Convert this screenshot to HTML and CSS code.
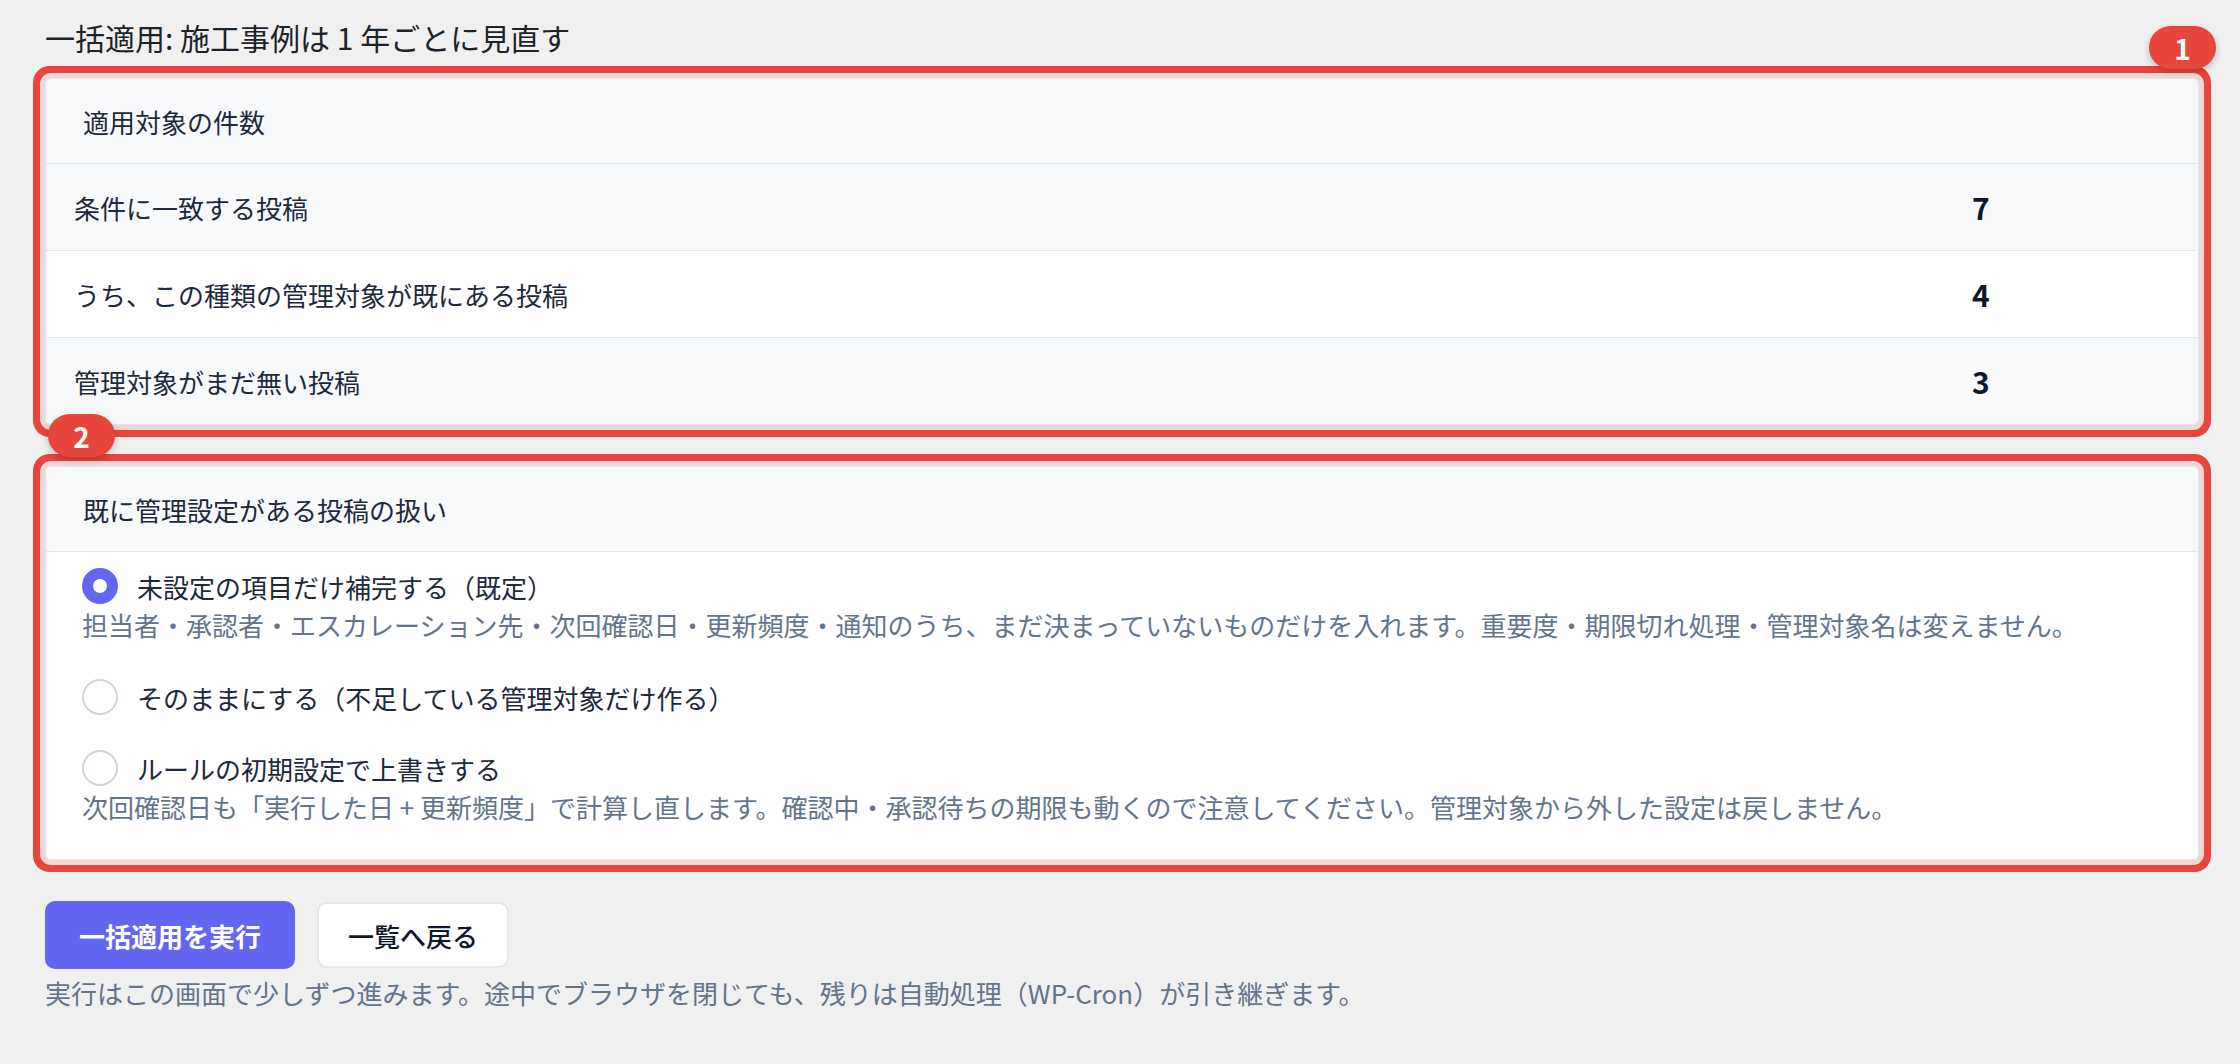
FILE: index.html
```html
<!DOCTYPE html>
<html lang="ja">
<head>
<meta charset="utf-8">
<title>一括適用</title>
<link rel="stylesheet" href="styles.css">
</head>
<body>
<div class="page">
  <h1 class="title">一括適用: 施工事例は 1 年ごとに見直す</h1>

  <section class="card card-counts">
    <span class="badge badge-right">1</span>
    <div class="card-head">適用対象の件数</div>
    <div class="row stripe">
      <span class="label">条件に一致する投稿</span>
      <span class="num">7</span>
    </div>
    <div class="row">
      <span class="label">うち、この種類の管理対象が既にある投稿</span>
      <span class="num">4</span>
    </div>
    <div class="row stripe last">
      <span class="label">管理対象がまだ無い投稿</span>
      <span class="num">3</span>
    </div>
  </section>

  <section class="card card-options">
    <span class="badge badge-left">2</span>
    <div class="card-head">既に管理設定がある投稿の扱い</div>
    <div class="options">
      <div class="option">
        <div class="opt-line"><span class="radio checked"></span><span class="opt-label">未設定の項目だけ補完する（既定）</span></div>
        <p class="opt-desc">担当者・承認者・エスカレーション先・次回確認日・更新頻度・通知のうち、まだ決まっていないものだけを入れます。重要度・期限切れ処理・管理対象名は変えません。</p>
      </div>
      <div class="option">
        <div class="opt-line"><span class="radio"></span><span class="opt-label">そのままにする（不足している管理対象だけ作る）</span></div>
      </div>
      <div class="option">
        <div class="opt-line"><span class="radio"></span><span class="opt-label">ルールの初期設定で上書きする</span></div>
        <p class="opt-desc">次回確認日も「実行した日 + 更新頻度」で計算し直します。確認中・承認待ちの期限も動くので注意してください。管理対象から外した設定は戻しません。</p>
      </div>
    </div>
  </section>

  <div class="actions">
    <button class="btn btn-primary">一括適用を実行</button>
    <button class="btn btn-secondary">一覧へ戻る</button>
  </div>
  <p class="note">実行はこの画面で少しずつ進みます。途中でブラウザを閉じても、残りは自動処理（WP-Cron）が引き継ぎます。</p>
</div>
</body>
</html>
```

FILE: styles.css
```css
* { box-sizing: border-box; }

html, body {
  margin: 0;
  padding: 0;
  background: #f0f0f1;
}

body {
  font-family: "Noto Sans CJK JP", "Noto Sans", "Liberation Sans", sans-serif;
  color: #1e293b;
}

.page {
  padding: 15px 41px 0 45px;
}

.title {
  margin: 0;
  font-size: 30px;
  line-height: 44px;
  font-weight: 400;
  color: #1d2327;
}

.card {
  position: relative;
  background: #ffffff;
  border: 1px solid #e2e8f0;
  border-radius: 6px;
  box-shadow: 0 0 0 5px #f1d6d4, 0 0 0 12px #e8453c;
}

.card-counts {
  margin-top: 19px;
}

.card-options {
  margin-top: 41px;
}

.card-head {
  height: 85px;
  display: flex;
  align-items: center;
  padding-left: 37px;
  font-size: 26px;
  background: #f8f9fb;
  border-bottom: 1px solid #e2e8f0;
  border-radius: 6px 6px 0 0;
  color: #1e293b;
}

.row {
  height: 87px;
  display: grid;
  grid-template-columns: 1fr 226px;
  align-items: center;
  border-bottom: 1px solid #e2e8f0;
  background: #ffffff;
}

.row.stripe { background: #f8f9fb; }

.row.last {
  border-bottom: 0;
  height: 86px;
  border-radius: 0 0 6px 6px;
}

.label {
  padding-left: 28px;
  font-size: 26px;
  color: #1e293b;
}

.num {
  font-size: 30px;
  font-weight: 700;
  color: #0f172a;
}

.options {
  display: flex;
  flex-direction: column;
  gap: 35px;
  padding: 16px 36px 33px 36px;
}

.opt-line {
  display: flex;
  align-items: center;
  height: 36px;
  gap: 19px;
}

.radio {
  flex: none;
  width: 36px;
  height: 36px;
  border-radius: 50%;
  border: 2px solid #cbd5e1;
  background: #ffffff;
}

.radio.checked {
  border: 11px solid #6366f1;
  background: #ffffff;
}

.opt-label {
  font-size: 26px;
  color: #1e293b;
}

.opt-desc {
  margin: 2px 0 0 0;
  font-size: 26px;
  line-height: 38px;
  color: #64748b;
}

.actions {
  margin-top: 41px;
  display: flex;
  align-items: center;
  gap: 22px;
}

.btn {
  font-family: inherit;
  font-size: 26px;
  border-radius: 10px;
  cursor: pointer;
}

.btn-primary {
  height: 68px;
  padding: 0 34px;
  background: #6366f1;
  color: #ffffff;
  border: 0;
  font-weight: 700;
}

.btn-secondary {
  height: 66px;
  padding: 0 29px;
  background: #ffffff;
  color: #0f172a;
  border: 2px solid #e2e8f0;
  font-weight: 500;
}

.note {
  margin: 5px 0 0 0;
  font-size: 26px;
  line-height: 38px;
  color: #64748b;
}

.badge {
  position: absolute;
  z-index: 5;
  top: -53px;
  width: 67px;
  height: 43px;
  border-radius: 22px;
  background: #e8453c;
  color: #ffffff;
  font-size: 28px;
  font-weight: 700;
  display: flex;
  align-items: center;
  justify-content: center;
  box-shadow: 0 3px 7px rgba(0, 0, 0, 0.22);
}

.badge-right { right: -18px; }
.badge-left { left: 2px; }
```
